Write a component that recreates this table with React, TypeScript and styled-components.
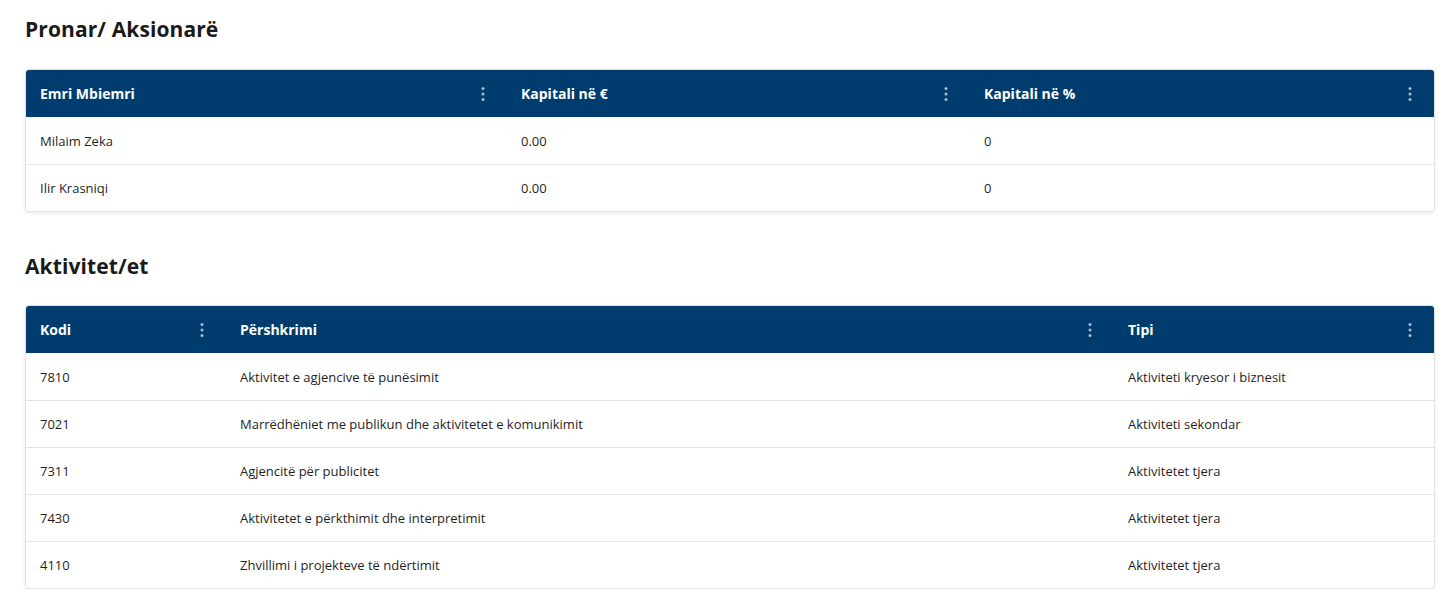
import React from "react";
import styled, { createGlobalStyle } from "styled-components";

const Global = createGlobalStyle`
  html, body { margin: 0; padding: 0; background: #ffffff; }
  body { font-family: "Open Sans", "Liberation Sans", sans-serif; color: #1c1c1c; }
`;

const Page = styled.div`
  padding: 0 21px 0 25px;
  display: flex;
  flex-direction: column;
`;

const Title = styled.h2<{ $top: number; $bottom: number }>`
  margin: 0;
  font-size: 21px;
  font-weight: 700;
  color: #1a1a1a;
  line-height: 24px;
  padding-top: ${(p) => p.$top}px;
  padding-bottom: ${(p) => p.$bottom}px;
  letter-spacing: 0.1px;
`;

const Card = styled.div`
  border: 1px solid #e3e3e3;
  border-radius: 4px;
  overflow: hidden;
  box-shadow: 0 1px 4px rgba(0, 0, 0, 0.08);
  background: #fff;
`;

const Row = styled.div<{ $cols: string }>`
  display: grid;
  grid-template-columns: ${(p) => p.$cols};
  height: 47px;
  align-items: center;
`;

const HeadRow = styled(Row)`
  background: #003d6e;
  height: 47px;
`;

const BodyRow = styled(Row)`
  border-top: 1px solid #e4e4e6;
  height: 46px;
  &:first-of-type { border-top: none; height: 47px; }
`;

const HeadCell = styled.div`
  display: flex;
  align-items: center;
  justify-content: space-between;
  padding: 0 20px 0 14px;
  color: #ffffff;
  font-size: 14px;
  font-weight: 700;
  height: 100%;
`;

const Cell = styled.div`
  padding: 0 14px;
  font-size: 13px;
  color: #1f1f1f;
  white-space: nowrap;
`;

const Dots = () => (
  <svg width="8" height="16" viewBox="0 0 8 16">
    <circle cx="4" cy="2.5" r="1.5" fill="#a9bccd" />
    <circle cx="4" cy="8" r="1.5" fill="#a9bccd" />
    <circle cx="4" cy="13.5" r="1.5" fill="#a9bccd" />
  </svg>
);

type TableProps = { cols: string; headers: string[]; rows: string[][] };

const Table = ({ cols, headers, rows }: TableProps) => (
  <Card>
    <HeadRow $cols={cols}>
      {headers.map((h) => (
        <HeadCell key={h}>
          <span>{h}</span>
          <Dots />
        </HeadCell>
      ))}
    </HeadRow>
    <div>
      {rows.map((r, i) => (
        <BodyRow $cols={cols} key={i}>
          {r.map((c, j) => (
            <Cell key={j}>{c}</Cell>
          ))}
        </BodyRow>
      ))}
    </div>
  </Card>
);

export default function App() {
  return (
    <>
      <Global />
      <Page>
        <Title $top={17} $bottom={28}>Pronar/ Aksionarë</Title>
        <Table
          cols="481px 463px 1fr"
          headers={["Emri Mbiemri", "Kapitali në €", "Kapitali në %"]}
          rows={[
            ["Milaim Zeka", "0.00", "0"],
            ["Ilir Krasniqi", "0.00", "0"],
          ]}
        />
        <Title $top={42} $bottom={27}>Aktivitet/et</Title>
        <Table
          cols="200px 888px 1fr"
          headers={["Kodi", "Përshkrimi", "Tipi"]}
          rows={[
            ["7810", "Aktivitet e agjencive të punësimit", "Aktiviteti kryesor i biznesit"],
            ["7021", "Marrëdhëniet me publikun dhe aktivitetet e komunikimit", "Aktiviteti sekondar"],
            ["7311", "Agjencitë për publicitet", "Aktivitetet tjera"],
            ["7430", "Aktivitetet e përkthimit dhe interpretimit", "Aktivitetet tjera"],
            ["4110", "Zhvillimi i projekteve të ndërtimit", "Aktivitetet tjera"],
          ]}
        />
      </Page>
    </>
  );
}
